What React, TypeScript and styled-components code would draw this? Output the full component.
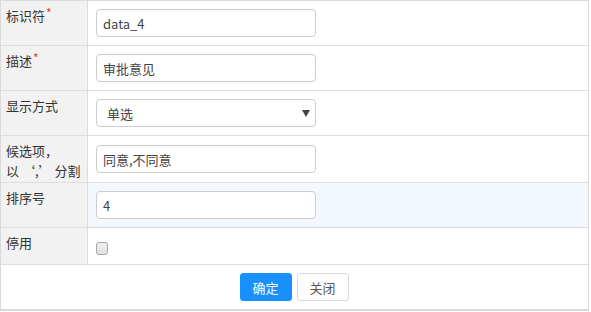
import React from "react";
import styled, { createGlobalStyle } from "styled-components";

const Global = createGlobalStyle`
  html, body { margin: 0; padding: 0; background: #fff; }
  body { font-family: "Noto Sans CJK SC", "Noto Sans", sans-serif; font-size: 13px; color: #333; }
`;

const Table = styled.div`
  width: 589px;
  box-sizing: border-box;
  border: 1px solid #d9d9d9;
  border-bottom-width: 2px;
  display: grid;
  grid-template-columns: 87px 1fr;
`;

const Label = styled.div`
  background: #f2f2f2;
  border-right: 1px solid #dcdcdc;
  border-bottom: 1px solid #dcdcdc;
  padding: 5px 4px 0 5px;
  line-height: 20px;
  font-size: 13px;
  color: #333;
`;

const Value = styled.div<{ $hl?: boolean; $h?: number }>`
  background: ${(p) => (p.$hl ? "#f3f8fe" : "#fff")};
  border-bottom: 1px solid #dcdcdc;
  padding: 8px 8px;
  min-height: ${(p) => (p.$h ? `${p.$h}px` : "auto")};
  box-sizing: border-box;
  display: flex;
  align-items: center;
`;

const Req = styled.span`
  color: #e4393c;
  font-size: 12px;
  vertical-align: top;
  line-height: 14px;
  margin-left: 1px;
`;

const Input = styled.input`
  width: 220px;
  height: 28px;
  box-sizing: border-box;
  border: 1px solid #ccc;
  border-radius: 4px;
  padding: 0 6px;
  font-family: "Noto Sans CJK SC", "Noto Sans", sans-serif;
  font-size: 13px;
  color: #444;
  background: #fff;
  outline: none;
`;

const SelectWrap = styled.div`
  position: relative;
  width: 220px;
  height: 28px;
`;

const Select = styled.select`
  appearance: none;
  -webkit-appearance: none;
  width: 220px;
  height: 28px;
  box-sizing: border-box;
  border: 1px solid #ccc;
  border-radius: 4px;
  padding: 0 10px;
  font-family: "Noto Sans CJK SC", "Noto Sans", sans-serif;
  font-size: 13px;
  color: #444;
  background: #fff;
  outline: none;
`;

const Arrow = styled.svg`
  position: absolute;
  right: 6px;
  top: 11px;
  pointer-events: none;
`;

const Check = styled.input`
  appearance: none;
  -webkit-appearance: none;
  width: 12px;
  height: 13px;
  margin: 5px 0 0 0;
  box-sizing: border-box;
  border: 1px solid #a6a6a6;
  border-radius: 3px;
  background: linear-gradient(#f0f0f0, #e0e0e0);
`;

const Footer = styled.div`
  grid-column: 1 / span 2;
  display: flex;
  justify-content: center;
  gap: 5px;
  padding: 8px 0 8px;
`;

const Button = styled.button<{ $primary?: boolean }>`
  width: 52px;
  height: 28px;
  box-sizing: border-box;
  border: 1px solid ${(p) => (p.$primary ? "#1890ff" : "#d9d9d9")};
  background: ${(p) => (p.$primary ? "#1890ff" : "#fff")};
  color: ${(p) => (p.$primary ? "#fff" : "#555")};
  border-radius: 3px;
  font-family: "Noto Sans CJK SC", "Noto Sans", sans-serif;
  font-size: 13px;
  padding: 0;
  margin-left: ${(p) => (p.$primary ? "-1px" : "0")};
`;

export default function App() {
  return (
    <>
      <Global />
      <Table>
        <Label>
          标识符<Req>*</Req>
        </Label>
        <Value>
          <Input defaultValue="data_4" />
        </Value>

        <Label>
          描述<Req>*</Req>
        </Label>
        <Value>
          <Input defaultValue="审批意见" />
        </Value>

        <Label>显示方式</Label>
        <Value>
          <SelectWrap>
            <Select defaultValue="single">
              <option value="single">单选</option>
              <option value="multi">多选</option>
            </Select>
            <Arrow width="8" height="7" viewBox="0 0 8 7">
              <path d="M0 0 H8 L4 7 Z" fill="#444" />
            </Arrow>
          </SelectWrap>
        </Value>

        <Label>
          候选项，
          <br />
          以 ‘,’ 分割
        </Label>
        <Value $h={47}>
          <Input defaultValue="同意,不同意" />
        </Value>

        <Label>排序号</Label>
        <Value $hl>
          <Input defaultValue="4" />
        </Value>

        <Label>停用</Label>
        <Value $h={37}>
          <Check type="checkbox" />
        </Value>

        <Footer>
          <Button $primary>确定</Button>
          <Button>关闭</Button>
        </Footer>
      </Table>
    </>
  );
}
